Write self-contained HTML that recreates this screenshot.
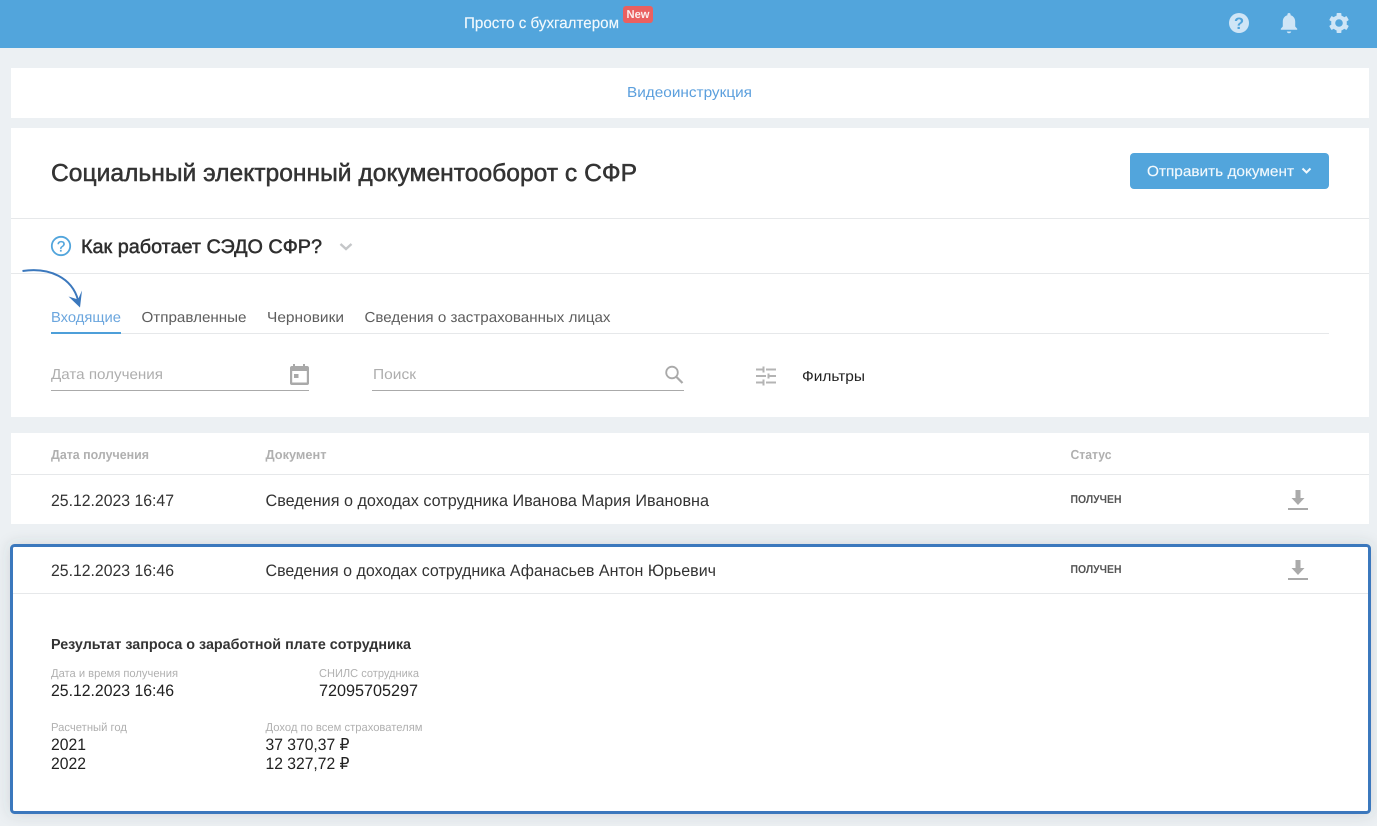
<!DOCTYPE html>
<html lang="ru"><head><meta charset="utf-8"><title>СЭДО</title>
<style>
html,body{margin:0;padding:0;width:1377px;height:826px;overflow:hidden;background:#ecf0f3}
svg{display:block;position:absolute;left:0;top:0}
text{font-family:"Liberation Sans",sans-serif;text-rendering:geometricPrecision}
.m{stroke-width:.5px;paint-order:stroke}
</style></head><body>
<svg width="1377" height="826" viewBox="0 0 1377 826" xmlns="http://www.w3.org/2000/svg">
<defs><filter id="sh" x="-5%" y="-15%" width="110%" height="130%"><feDropShadow dx="0" dy="0" stdDeviation="7" flood-color="#3c4650" flood-opacity=".16"/></filter></defs>
<rect width="1377" height="826" fill="#ecf0f3"/>
<!-- header -->
<rect width="1377" height="48" fill="#52a5dc"/>
<text x="464" y="28" font-size="15.500" fill="#f2f9fd" stroke="#f2f9fd" stroke-width=".15" textLength="155" lengthAdjust="spacingAndGlyphs">Просто с бухгалтером</text>
<rect x="623" y="6" width="30" height="17" rx="3" fill="#ea6060"/>
<text x="626.500" y="18" font-size="11.500" font-weight="700" fill="#fbeeee" textLength="23" lengthAdjust="spacingAndGlyphs">New</text>
<!-- help -->
<circle cx="1239" cy="23" r="10" fill="#cfe5f6"/>
<text x="1239" y="29" font-size="16.500" font-weight="700" fill="#52a5dc" text-anchor="middle">?</text>
<!-- bell -->
<path d="M1289 13c.9 0 1.600.6 1.600 1.400v.9c3 .8 4.600 3.500 4.600 6.400v4.800l2 2.300v1h-16.400v-1l2-2.300v-4.800c0-2.900 1.600-5.600 4.600-6.400v-.9c0-.8.700-1.400 1.600-1.400zM1286.800 31.500h4.400c0 1-1 1.700-2.200 1.700s-2.200-.7-2.200-1.700z" fill="#cfe5f6"/>
<!-- gear -->
<g fill="#cfe5f6" transform="translate(1339 23)">
<circle r="7.800"/>
<rect x="-2.400" y="-10" width="4.800" height="20" rx=".8"/>
<rect x="-2.400" y="-10" width="4.800" height="20" rx=".8" transform="rotate(60)"/>
<rect x="-2.400" y="-10" width="4.800" height="20" rx=".8" transform="rotate(120)"/>
<circle r="3.800" fill="#52a5dc"/>
</g>

<!-- panel video -->
<rect x="11" y="68" width="1358" height="50" fill="#fff"/>
<text x="627" y="97" font-size="14.500" fill="#5b9fdd" textLength="125" lengthAdjust="spacingAndGlyphs">Видеоинструкция</text>

<!-- main panel -->
<rect x="11" y="128" width="1358" height="289" fill="#fff"/>
<text x="51" y="181" font-size="24.500" fill="#333" stroke="#333" class="m" textLength="586" lengthAdjust="spacingAndGlyphs">Социальный электронный документооборот с СФР</text>
<rect x="1130" y="153" width="199" height="36" rx="4" fill="#52a5dc"/>
<text x="1147" y="176" font-size="14.500" fill="#f2f9fd" stroke="#f2f9fd" stroke-width=".15" textLength="147" lengthAdjust="spacingAndGlyphs">Отправить документ</text>
<path d="M1302.500 168.500l4 4 4-4" fill="none" stroke="#f2f9fd" stroke-width="2"/>
<rect x="11" y="218" width="1358" height="1" fill="#e6e8ea"/>
<circle cx="61" cy="246" r="9.200" fill="none" stroke="#52a5dc" stroke-width="1.800"/>
<text x="61" y="251.500" font-size="15" fill="#52a5dc" stroke="#52a5dc" stroke-width=".3" text-anchor="middle">?</text>
<text x="81" y="253" font-size="19.500" fill="#2e2e2e" stroke="#2e2e2e" class="m" textLength="241" lengthAdjust="spacingAndGlyphs">Как работает СЭДО СФР?</text>
<path d="M340.500 244l5.500 5 5.500-5" fill="none" stroke="#c4c6c8" stroke-width="2.400"/>
<rect x="11" y="273" width="1358" height="1" fill="#e6e8ea"/>

<!-- arrow -->
<path d="M22.500 271C50 267 72 278 78 300" fill="none" stroke="#3b78bd" stroke-width="2"/>
<path d="M68.500 296.500l9.500 3 4-9-2 17z" fill="#3b78bd"/>

<!-- tabs -->
<text x="51" y="322" font-size="14.500" fill="#6ba6de" textLength="70" lengthAdjust="spacingAndGlyphs">Входящие</text>
<text x="141.500" y="322" font-size="14.500" fill="#5d5d5d" textLength="105" lengthAdjust="spacingAndGlyphs">Отправленные</text>
<text x="267" y="322" font-size="14.500" fill="#5d5d5d" textLength="77" lengthAdjust="spacingAndGlyphs">Черновики</text>
<text x="364.500" y="322" font-size="14.500" fill="#5d5d5d" textLength="246" lengthAdjust="spacingAndGlyphs">Сведения о застрахованных лицах</text>
<rect x="51" y="333" width="1278" height="1" fill="#e6e8ea"/>
<rect x="51" y="332" width="70" height="2" fill="#4d9fd9"/>

<!-- filters -->
<text x="51" y="379" font-size="14.500" fill="#aeaeae" textLength="112" lengthAdjust="spacingAndGlyphs">Дата получения</text>
<rect x="51" y="390" width="258" height="1" fill="#aaa"/>
<path d="M293 364h2v2h8v-2h2v2h2.200c1 0 1.800.8 1.800 1.800v15.400c0 1-.8 1.800-1.800 1.800h-15.400c-1 0-1.800-.8-1.800-1.800v-15.400c0-1 .8-1.800 1.800-1.800H293zM292.200 371v11.500h14.600V371zM294 374h4.500v4H294z" fill="#a9a9a9" fill-rule="evenodd"/>
<text x="373" y="379" font-size="14.500" fill="#aeaeae" textLength="43" lengthAdjust="spacingAndGlyphs">Поиск</text>
<rect x="372" y="390" width="312" height="1" fill="#aaa"/>
<circle cx="672" cy="372.500" r="5.800" fill="none" stroke="#a9a9a9" stroke-width="1.800"/>
<path d="M676.500 377l6 6" stroke="#a9a9a9" stroke-width="2.200"/>
<path d="M756 369.500h8M766 369.500h10M763.500 366.500v6M756 376h10M768 376h8M768.500 373.500v5M756 382.500h8M766 382.500h10M763.500 379.500v6" fill="none" stroke="#b4b4b4" stroke-width="2"/>
<text x="802" y="381" font-size="14.500" fill="#222" textLength="63" lengthAdjust="spacingAndGlyphs">Фильтры</text>

<!-- table -->
<rect x="11" y="433" width="1358" height="91" fill="#fff"/>
<text x="51" y="459" font-size="13" font-weight="700" fill="#b0b0b0" textLength="98" lengthAdjust="spacingAndGlyphs">Дата получения</text>
<text x="265.500" y="459" font-size="13" font-weight="700" fill="#b0b0b0" textLength="61" lengthAdjust="spacingAndGlyphs">Документ</text>
<text x="1070.500" y="459" font-size="13" font-weight="700" fill="#b0b0b0" textLength="41" lengthAdjust="spacingAndGlyphs">Статус</text>
<rect x="11" y="474" width="1358" height="1" fill="#e6e8ea"/>
<text x="51" y="506" font-size="16.500" fill="#333" textLength="123" lengthAdjust="spacingAndGlyphs">25.12.2023 16:47</text>
<text x="265.500" y="506" font-size="16.500" fill="#333" textLength="443.500" lengthAdjust="spacingAndGlyphs">Сведения о доходах сотрудника Иванова Мария Ивановна</text>
<text x="1070.500" y="503" font-size="11.500" font-weight="700" fill="#555" textLength="51" lengthAdjust="spacingAndGlyphs">ПОЛУЧЕН</text>
<path d="M1295.500 490h5v8h4l-6.500 7-6.500-7h4z" fill="#aaa"/><rect x="1288" y="508" width="20" height="2" fill="#aaa"/>

<!-- expanded -->
<rect x="11.500" y="545.500" width="1358" height="267" rx="3" fill="#fff" stroke="#3b78bd" stroke-width="3" filter="url(#sh)"/>
<text x="51" y="576" font-size="16.500" fill="#333" textLength="123" lengthAdjust="spacingAndGlyphs">25.12.2023 16:46</text>
<text x="265.500" y="576" font-size="16.500" fill="#333" textLength="450.500" lengthAdjust="spacingAndGlyphs">Сведения о доходах сотрудника Афанасьев Антон Юрьевич</text>
<text x="1070.500" y="573" font-size="11.500" font-weight="700" fill="#555" textLength="51" lengthAdjust="spacingAndGlyphs">ПОЛУЧЕН</text>
<path d="M1295.500 560h5v8h4l-6.500 7-6.500-7h4z" fill="#aaa"/><rect x="1288" y="578" width="20" height="2" fill="#aaa"/>
<rect x="13" y="593" width="1355" height="1" fill="#e6e8ea"/>
<text x="51" y="649" font-size="14.500" font-weight="700" fill="#333" textLength="360" lengthAdjust="spacingAndGlyphs">Результат запроса о заработной плате сотрудника</text>
<text x="51" y="677" font-size="11.500" fill="#b0b0b0" textLength="127" lengthAdjust="spacingAndGlyphs">Дата и время получения</text>
<text x="51" y="696" font-size="16.500" fill="#222" textLength="123" lengthAdjust="spacingAndGlyphs">25.12.2023 16:46</text>
<text x="319" y="677" font-size="11.500" fill="#b0b0b0" textLength="100" lengthAdjust="spacingAndGlyphs">СНИЛС сотрудника</text>
<text x="319" y="696" font-size="16.500" fill="#222" textLength="99" lengthAdjust="spacingAndGlyphs">72095705297</text>
<text x="51" y="731" font-size="11.500" fill="#b0b0b0" textLength="76" lengthAdjust="spacingAndGlyphs">Расчетный год</text>
<text x="51" y="750" font-size="16.500" fill="#222" textLength="35" lengthAdjust="spacingAndGlyphs">2021</text>
<text x="51" y="769" font-size="16.500" fill="#222" textLength="35" lengthAdjust="spacingAndGlyphs">2022</text>
<text x="265.500" y="731" font-size="11.500" fill="#b0b0b0" textLength="157" lengthAdjust="spacingAndGlyphs">Доход по всем страхователям</text>
<text x="265.500" y="750" font-size="16.500" fill="#222" textLength="84" lengthAdjust="spacingAndGlyphs">37 370,37 ₽</text>
<text x="265.500" y="769" font-size="16.500" fill="#222" textLength="84" lengthAdjust="spacingAndGlyphs">12 327,72 ₽</text>
</svg>
</body></html>
